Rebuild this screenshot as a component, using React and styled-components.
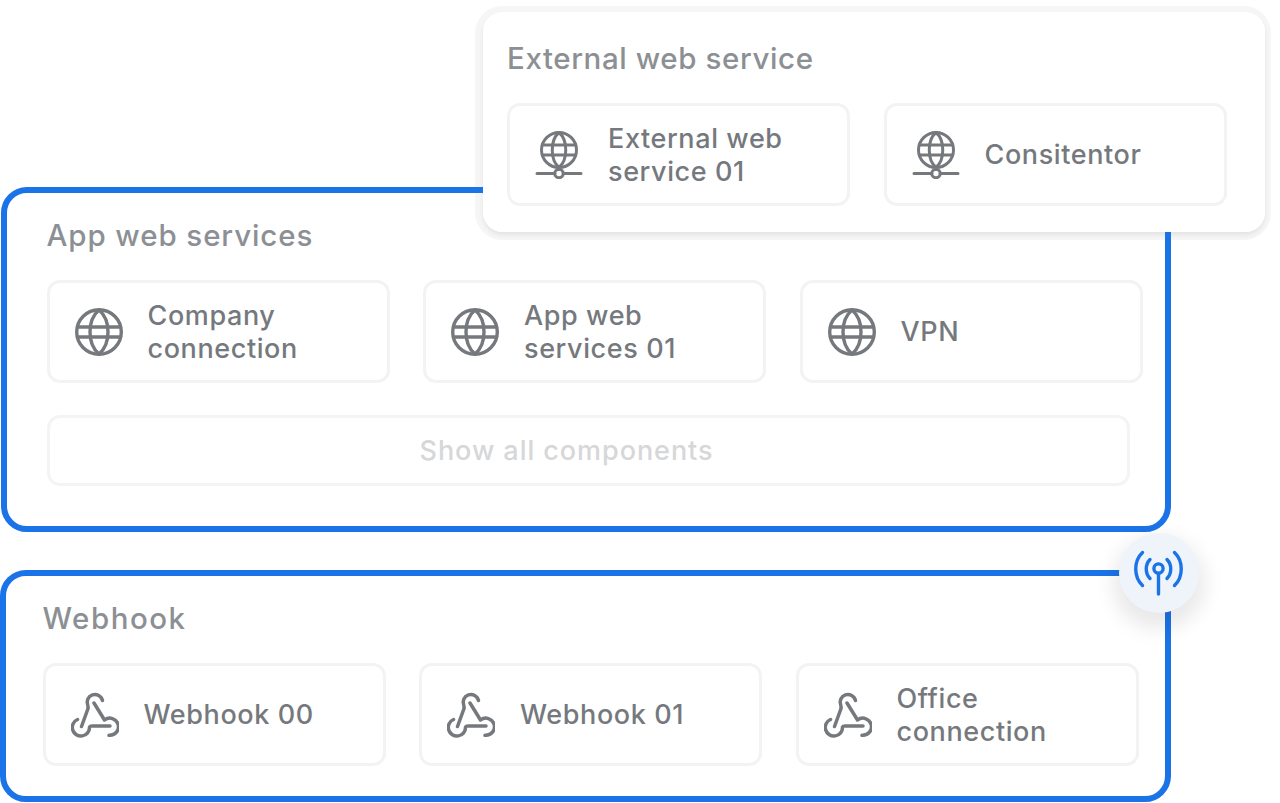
import styled, { createGlobalStyle } from 'styled-components';

const GlobalStyle = createGlobalStyle`
  * {
    box-sizing: border-box;
  }

  html, body {
    margin: 0;
    background: #fff;
  }
`;

const Stage = styled.div`
  width: 1280px;
  height: 803px;
  overflow: hidden;
  display: flex;
  flex-direction: column;
  font-family: Inter, 'Liberation Sans', sans-serif;
`;

// shadow sits on this outer box so the blue panel border paints over it
const FloatingCard = styled.section`
  width: 782px;
  height: 220px;
  margin: 12px 0 -45px 483px;
  border-radius: 20px;
  box-shadow: 0 3px 5px rgba(0, 0, 0, 0.08), -1px 1px 0 7px #f6f6f7;
`;

const FloatingBody = styled.div`
  position: relative;
  z-index: 2;
  height: 100%;
  padding: 26px 24px 0;
  background: #fff;
  border-radius: 20px;
`;

const Panel = styled.section`
  position: relative;
  width: ${props => props.$width}px;
  height: ${props => props.$height}px;
  margin: ${props => props.$margin};
  padding: ${props => props.$padding};
  border: 6px solid #1b73e8;
  border-radius: 26px;
`;

const Title = styled.h2`
  margin: 0 0 25px;
  height: 40px;
  font-size: 29.5px;
  font-weight: 500;
  line-height: 40px;
  letter-spacing: ${props => props.$tracking}px;
  color: #8c9095;
`;

const Row = styled.div`
  display: flex;
  gap: 33.5px;
`;

const Item = styled.div`
  flex: none;
  width: 343px;
  height: 103px;
  padding-left: 25px;
  display: flex;
  align-items: center;
  gap: 25px;
  background: #fff;
  border: 3px solid #f3f3f4;
  border-radius: 13px;
`;

const ItemLabel = styled.span`
  font-size: 27px;
  font-weight: 450;
  line-height: 33px;
  letter-spacing: 0.6px;
  color: #75797e;
`;

const ShowAll = styled.div`
  width: 1083px;
  height: 71px;
  margin-top: 32px;
  padding-right: 43px;
  display: flex;
  align-items: center;
  justify-content: center;
  border: 3px solid #f4f4f5;
  border-radius: 13px;
  font-size: 27px;
  font-weight: 500;
  letter-spacing: 0.95px;
  color: #d6d7d9;
`;

const SignalBadge = styled.div`
  position: absolute;
  top: -43px;
  right: -34px;
  width: 80px;
  height: 80px;
  display: flex;
  align-items: center;
  justify-content: center;
  background: #eff4fb;
  border-radius: 50%;
  box-shadow: 0 10px 20px 6px rgba(0, 0, 0, 0.09);
`;

const Icon = styled.svg`
  flex: none;
  fill: none;
  stroke: ${props => props.$color || '#75787c'};
  stroke-width: ${props => props.$stroke || 3.4};
  stroke-linecap: round;
  stroke-linejoin: round;
`;

const GlobeIcon = () => (
  <Icon width="48" height="48" viewBox="0 0 48 48">
    <circle cx="24" cy="24" r="22.3" />
    <path d="M24 2C12 12 12 36 24 46C36 36 36 12 24 2Z" />
    <path d="M3.5 19H44.5M3.5 29H44.5" />
  </Icon>
);

const NetworkGlobeIcon = () => (
  <Icon width="48" height="48" viewBox="0 0 48 48" $stroke={3}>
    <circle cx="24" cy="19" r="17.5" />
    <path d="M24 1.5C15 9 15 29 24 36.5C33 29 33 9 24 1.5Z" />
    <path d="M8 14H40M8 24H40" />
    <circle cx="24" cy="42.5" r="4.2" />
    <path d="M24 36.5V38.3M2 42.5H19.8M28.2 42.5H46" />
  </Icon>
);

const WebhookIcon = () => (
  <Icon width="48" height="48" viewBox="0 0 48 48" $stroke={3.5}>
    <path d="M31.5 9.5A7.8 7.8 0 1 0 16.8 14.5Q17.6 16.5 16.5 19L10.5 35.5" />
    <path d="M23 12L33.5 29A8.6 8.6 0 1 1 38 44.3" />
    <path d="M6.5 28.5A8.6 8.6 0 1 0 18.5 36Q19 35 21 35H39" />
  </Icon>
);

const SignalIcon = () => (
  <Icon width="50" height="46" viewBox="0 0 50 46" $color="#1b73e8" $stroke={3.4}>
    <circle cx="24.5" cy="18.5" r="4.6" />
    <path d="M24.5 23.5V44" />
    <path d="M8.5 2.5C-0.5 11 -0.5 27 8.5 35.5" />
    <path d="M16 9.5C11 14.5 11 23.5 16 28.5" />
    <path d="M33 9.5C38 14.5 38 23.5 33 28.5" />
    <path d="M40.5 2.5C49.5 11 49.5 27 40.5 35.5" />
  </Icon>
);

const externalItems = [
  { id: 'ext-1', label: <>External web<br />service 01</> },
  { id: 'ext-2', label: 'Consitentor' },
];

const appItems = [
  { id: 'app-1', label: <>Company<br />connection</> },
  { id: 'app-2', label: <>App web<br />services 01</> },
  { id: 'app-3', label: 'VPN' },
];

const webhookItems = [
  { id: 'hook-1', label: 'Webhook 00' },
  { id: 'hook-2', label: 'Webhook 01' },
  { id: 'hook-3', label: <>Office<br />connection</> },
];

const renderItems = (items, icon) =>
  items.map(item => (
    <Item key={item.id}>
      {icon}
      <ItemLabel>{item.label}</ItemLabel>
    </Item>
  ));

const App = () => (
  <>
    <GlobalStyle />
    <Stage>
      <FloatingCard>
        <FloatingBody>
          <Title $tracking={0.6}>External web service</Title>
          <Row>{renderItems(externalItems, <NetworkGlobeIcon />)}</Row>
        </FloatingBody>
      </FloatingCard>

      <Panel $width={1170} $height={345} $margin="0 0 0 1px" $padding="22px 0 0 39.5px">
        <Title $tracking={0.9}>App web services</Title>
        <Row>{renderItems(appItems, <GlobeIcon />)}</Row>
        <ShowAll>Show all components</ShowAll>
      </Panel>

      <Panel $width={1171} $height={232} $margin="38px 0 0" $padding="22px 0 0 36.5px">
        <SignalBadge>
          <SignalIcon />
        </SignalBadge>
        <Title $tracking={1.5}>Webhook</Title>
        <Row>{renderItems(webhookItems, <WebhookIcon />)}</Row>
      </Panel>
    </Stage>
  </>
);

export default App;
